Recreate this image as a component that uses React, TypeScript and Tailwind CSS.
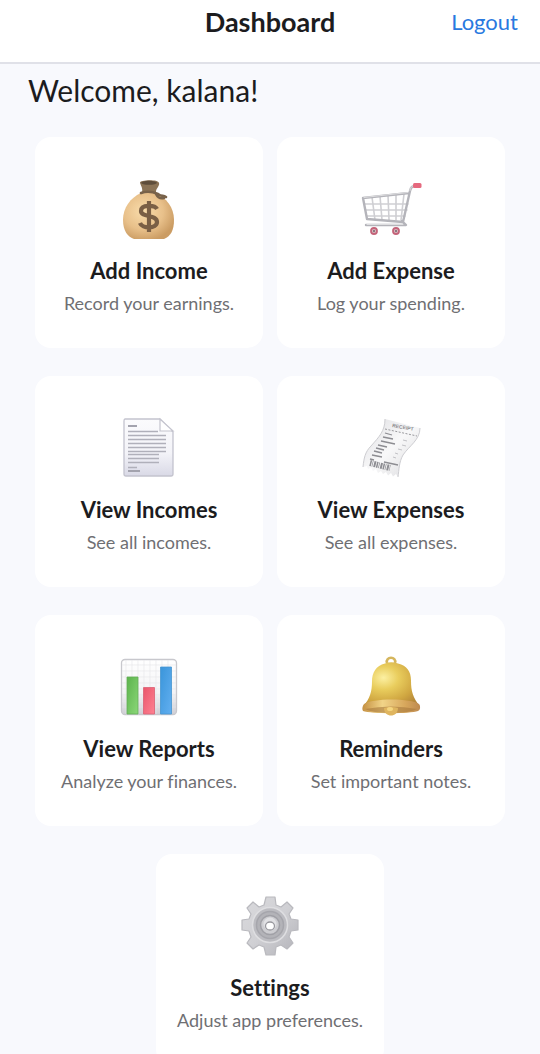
import type { ReactNode } from "react";

function MoneyBagIcon() {
  return (
    <svg viewBox="0 0 64 64" className="size-16" aria-hidden="true">
      <defs>
        <radialGradient id="bag" cx="0.4" cy="0.4" r="0.65">
          <stop offset="0" stopColor="#f9dcab" />
          <stop offset="0.6" stopColor="#e8c08a" />
          <stop offset="1" stopColor="#cb9c63" />
        </radialGradient>
      </defs>
      <path d="M24 16C13 21 6 31 6 43c0 11 5 17 11 19h30c7-3 10-9 10-19 0-13-8-22-18-27z" fill="url(#bag)" />
      <path d="M23 6c-1-3 18-4 19 0 1 3-3 5-3 9l-14 1c1-5-1-7-2-10z" fill="#8b7355" />
      <ellipse cx="32" cy="5.800" rx="8" ry="2" fill="#5e4d3a" />
      <path d="M24 16q8-3 17 1M41 17c4 3 5 1 8 3M39 17c2 4 4 5 8 4" fill="none" stroke="#78624a" strokeWidth="2.600" strokeLinecap="round" />
      <path d="M40 32c-2-4-16-5-16 2 0 7 16 3 16 11 0 7-15 7-17 1M32 24v31" fill="none" stroke="#7a5f45" strokeWidth="4.200" />
    </svg>
  );
}

function CartIcon() {
  return (
    <svg viewBox="0 0 64 64" className="size-16" aria-hidden="true">
      <g fill="none" strokeLinejoin="round" strokeLinecap="round">
        <path d="M13 20l3 23M21 19l2 24M29 18l1 25M37 17v26M45 17l-3 26M6 27h43M7 33h41M8 39h38" stroke="#cfcfd3" strokeWidth="1.600" />
        <path d="M57 9c-4 0-5 1-6 5l-7 31L8 42 4 21l46-5M43 44l4 4H7" stroke="#b4b4ba" strokeWidth="2.400" />
        <path d="M57 8.500c-4 0-5 1-6 5M5 20.500l44-5M8 47.500h36" stroke="#dedee0" strokeWidth="1" />
      </g>
      <rect x="54" y="6" width="8.500" height="5" rx="1.500" fill="#e5697e" />
      <circle cx="15" cy="54" r="3" fill="#dcc2c8" stroke="#c46379" strokeWidth="1.800" />
      <circle cx="37" cy="54" r="3" fill="#dcc2c8" stroke="#c46379" strokeWidth="1.800" />
      <circle cx="15" cy="54" r="1.200" fill="#8a757d" />
      <circle cx="37" cy="54" r="1.200" fill="#8a757d" />
    </svg>
  );
}

function DocumentIcon() {
  return (
    <svg viewBox="0 0 64 64" className="size-16" aria-hidden="true">
      <defs>
        <linearGradient id="paper" x1="0" y1="0" x2="0" y2="1">
          <stop offset="0" stopColor="#fbfbfd" />
          <stop offset="0.6" stopColor="#f3f3f8" />
          <stop offset="1" stopColor="#d9d9e6" />
        </linearGradient>
      </defs>
      <path d="M8 3h35l13 13v42q0 2-2 2H9q-2 0-2-2V5q0-2 1-2z" fill="url(#paper)" stroke="#c3c3ce" strokeWidth="1.300" />
      <path d="M43 3v12h13z" fill="#fff" stroke="#c4c4ce" strokeWidth="1.200" />
      <path d="M11 10h9M11 55h12" stroke="#a3a3ae" strokeWidth="2" />
      <path d="M11 15.500h30M11 19.500h38M11 23.500h38M11 27.500h38M11 31.500h38M11 35.500h38M11 38.500h31M11 42.500h31M11 46.500h31M11 51.500h9" stroke="#b0b0ba" strokeWidth="1.300" />
    </svg>
  );
}

function ReceiptIcon() {
  return (
    <svg viewBox="0 0 64 64" className="size-16" aria-hidden="true">
      <defs>
        <linearGradient id="receipt" x1="0" y1="0" x2="1" y2="1">
          <stop offset="0" stopColor="#dedee1" />
          <stop offset="0.5" stopColor="#f8f8f9" />
          <stop offset="1" stopColor="#dadadd" />
        </linearGradient>
      </defs>
      <path d="M26 3L61 12C61 24 50 30 44 39C40 46 40 54 39 61L37 58 34 60.500 32 57 29 59.500 27 56 24 58 22 55 19 57 17 53 14 55 12 51.500 9 53 8 50 4 51C5 42 6 36 12 30C20 21 26 15 26 3z" fill="url(#receipt)" />
      <path d="M61 12C61 24 50 30 44 39C40 46 40 54 39 61M26 3C26 15 20 21 12 30C6 36 5 42 4 51" fill="none" stroke="#cdcdd1" strokeWidth="1" />
      <text x="33" y="11" transform="rotate(10 33 11)" fontSize="5" fontFamily="Liberation Sans, sans-serif" fontWeight="700" fill="#88888c">RECEIPT</text>
      <path d="M26 13l32 7" stroke="#9a9a9e" strokeWidth="1" strokeDasharray="2 1.500" />
      <path d="M26 17l7 2M24 21l10 2M22 25l14 3M19 29l9 2M17 32l8 2M15 35l8 2M13 39l10 2M11 43l4 1M25 46l14 3" stroke="#8d8d92" strokeWidth="1.300" />
      <path d="M44 24l4 1M43 29l4 1M39 33l4 1M36 37l3 1M34 41l3 1" stroke="#c2c2c6" strokeWidth="1" />
      <path d="M11 47l20 5" stroke="#8d8d92" strokeWidth="6" strokeDasharray="1.500 .8 .7 1 2 .7" />
    </svg>
  );
}

function ChartIcon() {
  return (
    <svg viewBox="0 0 64 64" className="size-16" aria-hidden="true">
      <defs>
        <linearGradient id="chart" x1="0" y1="0" x2="0" y2="1">
          <stop offset="0" stopColor="#fff" />
          <stop offset="0.6" stopColor="#f4f4f6" />
          <stop offset="1" stopColor="#cfcfd5" />
        </linearGradient>
        <linearGradient id="green" x1="0" y1="0" x2="1" y2="1">
          <stop stopColor="#5cb34d" />
          <stop offset="1" stopColor="#8bd778" />
        </linearGradient>
        <linearGradient id="red" x1="0" y1="0" x2="1" y2="1">
          <stop stopColor="#e9566c" />
          <stop offset="1" stopColor="#ff8292" />
        </linearGradient>
        <linearGradient id="blue" x1="0" y1="0" x2="1" y2="1">
          <stop stopColor="#3a95da" />
          <stop offset="1" stopColor="#62aff0" />
        </linearGradient>
      </defs>
      <rect x="4.500" y="4.500" width="55" height="55" rx="3.500" fill="url(#chart)" stroke="#c8c8cd" strokeWidth="1.300" />
      <path d="M9 5v54M15 5v54M21 5v54M27 5v54M33 5v54M39 5v54M45 5v54M51 5v54M5 10h54M5 16h54M5 22h54M5 28h54M5 34h54M5 40h54M5 46h54M5 52h54" stroke="#e5e5e9" strokeWidth="0.600" />
      <path d="M10 22h11v37H10z" fill="url(#green)" stroke="#62ad56" strokeWidth="0.800" />
      <path d="M26.500 32.500h11V59h-11z" fill="url(#red)" stroke="#db5f73" strokeWidth="0.800" />
      <path d="M43.500 12h11v47h-11z" fill="url(#blue)" stroke="#4695d1" strokeWidth="0.800" />
    </svg>
  );
}

function BellIcon() {
  return (
    <svg viewBox="0 0 64 64" className="size-16" aria-hidden="true">
      <defs>
        <radialGradient id="bell" cx="0.36" cy="0.35" r="0.75">
          <stop offset="0" stopColor="#fcf0a2" />
          <stop offset="0.35" stopColor="#e9cd5d" />
          <stop offset="0.75" stopColor="#cfa540" />
          <stop offset="1" stopColor="#b5883a" />
        </radialGradient>
        <linearGradient id="rim" x1="0" x2="1">
          <stop stopColor="#c59143" />
          <stop offset="0.35" stopColor="#f1d488" />
          <stop offset="0.75" stopColor="#d7a65b" />
          <stop offset="1" stopColor="#bd8950" />
        </linearGradient>
      </defs>
      <path d="M28 8c-2-7 10-7 8 0" fill="none" stroke="#d5b65e" strokeWidth="2.600" />
      <path d="M26 8.500Q32 6 39 8.500c9 2 13 8 13 17 0 11 2 17 9 26H4c7-8 9-15 9-25 0-9 4-16 13-18z" fill="url(#bell)" />
      <path d="M5 49c8-6 47-6 55 0 2 3 1 6-1 7-8 3-47 3-55 0-1-2-1-4 1-7z" fill="url(#rim)" />
      <path d="M6 54q26-5 52 0-7 4-26 4T6 54z" fill="#a97a3e" opacity="0.600" />
      <path d="M25 53q7-2 14 0c0 10-14 10-14 0z" fill="#dfb55f" />
      <ellipse cx="31" cy="54" rx="3" ry="2" fill="#f5d680" />
    </svg>
  );
}

function GearIcon() {
  return (
    <svg viewBox="0 0 64 64" className="size-16" aria-hidden="true">
      <defs>
        <linearGradient id="gear" x1="0" y1="0" x2="1" y2="1">
          <stop stopColor="#dadadd" />
          <stop offset="0.5" stopColor="#d0d0d4" />
          <stop offset="1" stopColor="#b2b2b8" />
        </linearGradient>
      </defs>
      <path d="M28 3h9l1 8 5 2 6-5 6 6-4 6 2 5 7 1v10l-7 1-2 6 4 6-6 6-6-4-5 2-1 8h-9l-2-8-5-2-6 4-6-6 4-6-2-6-7-1V26l7-1 2-5-4-6 6-6 6 5 5-2z" fill="url(#gear)" stroke="#b9b9be" strokeWidth="1.200" strokeLinejoin="round" />
      <circle cx="32" cy="31" r="17.500" fill="#bcbcc1" stroke="#dedee1" strokeWidth="1.500" />
      <circle cx="32" cy="31" r="13.500" fill="#b3b3b8" stroke="#a6a6ac" strokeWidth="1.500" />
      <circle cx="32" cy="31" r="9.500" fill="#cdcdd1" stroke="#a0a0a6" strokeWidth="1.500" />
      <circle cx="32" cy="30" r="6.500" fill="#e1e1e4" />
      <ellipse cx="32" cy="32" rx="4.500" ry="4" fill="#fff" stroke="#99999f" strokeWidth="1.300" />
    </svg>
  );
}

const cards: { title: string; text: string; icon: ReactNode }[] = [
  { title: "Add Income", text: "Record your earnings.", icon: <MoneyBagIcon /> },
  { title: "Add Expense", text: "Log your spending.", icon: <CartIcon /> },
  { title: "View Incomes", text: "See all incomes.", icon: <DocumentIcon /> },
  { title: "View Expenses", text: "See all expenses.", icon: <ReceiptIcon /> },
  { title: "View Reports", text: "Analyze your finances.", icon: <ChartIcon /> },
  { title: "Reminders", text: "Set important notes.", icon: <BellIcon /> },
  { title: "Settings", text: "Adjust app preferences.", icon: <GearIcon /> },
];

export default function App() {
  return (
    <div className="flex h-screen flex-col bg-[#f8f9fd] font-['Lato',sans-serif] text-[#1c1c1e] [font-variant-ligatures:none]">
      <header className="grid shrink-0 grid-cols-[1fr_auto_1fr] items-center border-b-2 border-[#e0e1e8] bg-white px-[22px] pt-1 pb-[22px]">
        <h1 className="col-start-2 text-[27px] leading-9 font-bold">Dashboard</h1>
        <button type="button" className="justify-self-end text-[22px] leading-9 text-[#2979df]">
          Logout
        </button>
      </header>
      <main className="min-h-0 flex-1 overflow-y-auto pb-7 [scrollbar-width:none]">
        <h2 className="px-7 pt-2 pb-[29px] text-[30px] leading-9">Welcome, kalana!</h2>
        <div className="flex flex-wrap justify-center gap-x-3.5 gap-y-7 px-[35px]">
          {cards.map((card) => (
            <button
              key={card.title}
              type="button"
              className="flex w-[calc(50%-7px)] flex-col items-center rounded-2xl bg-white pt-10 pb-[33px] text-center"
            >
              {card.icon}
              <span className="mt-4 text-[22px] leading-7 font-bold">{card.title}</span>
              <span className="mt-1.5 text-[18px] leading-6 text-[#6f6f73]">{card.text}</span>
            </button>
          ))}
        </div>
      </main>
    </div>
  );
}
